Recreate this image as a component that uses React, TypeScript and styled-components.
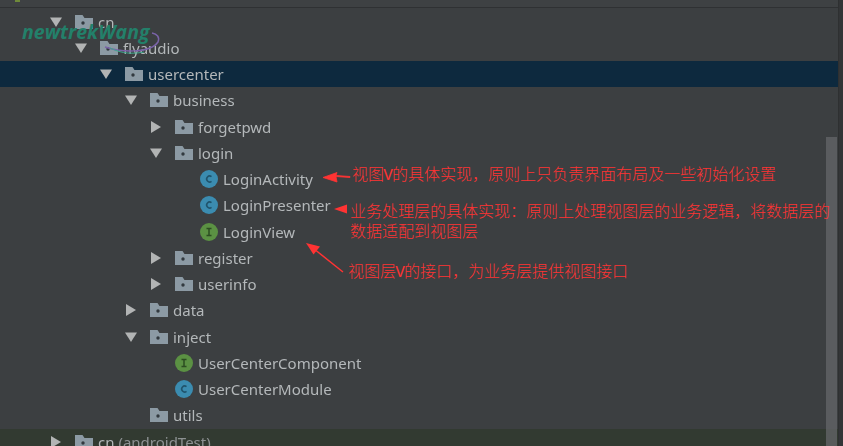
import * as React from 'react';
import styled, {createGlobalStyle} from 'styled-components';

const Global = createGlobalStyle`
    html, body {
        margin: 0;
        padding: 0;
        background: #3c3f41;
        overflow: hidden;
    }
`;

const Page = styled.div`
    position: relative;
    display: flex;
    width: 843px;
    height: 446px;
    overflow: hidden;
    background: #3c3f41;
    font-family: "Noto Sans", "Open Sans", sans-serif;
`;

const Main = styled.div`
    flex: 1;
    display: flex;
    flex-direction: column;
    min-width: 0;
`;

const RightEdge = styled.div`
    width: 4px;
    background: #333537;
    border-left: 1px solid #2e3031;
`;

const TopBar = styled.div`
    height: 7px;
    flex-shrink: 0;
    background: #3e4143;
    border-bottom: 1px solid #2f3133;
    margin-bottom: 0.5px;
`;

const Tree = styled.div`
    display: flex;
    flex-direction: column;
    filter: blur(0.35px);
`;

const Row = styled.div<{$depth: number; $tone?: 'selected' | 'module'}>`
    display: flex;
    align-items: center;
    height: 26.25px;
    flex-shrink: 0;
    box-sizing: border-box;
    padding-left: ${({$depth}) => 50 + $depth * 25}px;
    background: ${({$tone}) =>
        $tone === 'selected' ? '#0d293e' : $tone === 'module' ? '#323a31' : 'transparent'};
`;

const ArrowSlot = styled.div`
    width: 25px;
    flex-shrink: 0;
    display: flex;
    align-items: center;
`;

const Label = styled.span`
    margin-left: 5px;
    font-size: 15px;
    line-height: 20px;
    color: #b4b8ba;
    white-space: nowrap;
`;

const Muted = styled.span`
    color: #8d9192;
`;

const Annotation = styled.div<{$left: number; $top: number}>`
    position: absolute;
    left: ${({$left}) => $left}px;
    top: ${({$top}) => $top}px;
    width: 482px;
    font-family: "Noto Sans CJK SC", sans-serif;
    font-size: 16px;
    font-weight: 300;
    line-height: 20px;
    color: #ff3333;
`;

const Latin = styled.span`
    font-family: "Liberation Mono", monospace;
    font-size: 16px;
    margin: 0 -0.8px;
`;

const Scrollbar = styled.div`
    position: absolute;
    left: 826px;
    top: 137px;
    bottom: 0;
    width: 11px;
    background: rgba(98, 100, 102, 0.8);
`;

const Watermark = styled.div`
    position: absolute;
    left: 22px;
    top: 18px;
    font-family: "Open Sans", sans-serif;
    font-size: 19.5px;
    line-height: 27px;
    font-style: italic;
    font-weight: 700;
    color: #23806a;
`;

const Overlay = styled.svg`
    position: absolute;
    left: 0;
    top: 0;
    pointer-events: none;
`;

const Tick = styled.div`
    position: absolute;
    left: 15px;
    top: 0;
    width: 5px;
    height: 2px;
    background: #6f8a3a;
`;

const Expander: React.FC<{open: boolean}> = ({open}) => (
    <svg width="12" height="12" viewBox="0 0 12 12">
        {open ? <path d="M0 1.5h12L6 11z" fill="#b2b4b4" /> : <path d="M1 0l10 6-10 6z" fill="#b2b4b4" />}
    </svg>
);

const FolderIcon: React.FC = () => (
    <svg width="18" height="14" viewBox="0 0 18 14">
        <path d="M0 0h7.5l2 3H18v11H0z" fill="#8c9aa4" />
        <circle cx="8" cy="8" r="1.7" fill="#32393f" />
    </svg>
);

const TypeIcon: React.FC<{kind: 'class' | 'interface'}> = ({kind}) => (
    <svg width="18" height="18" viewBox="0 0 18 18">
        <circle cx="9" cy="9" r="9" fill={kind === 'class' ? '#3b8cb0' : '#5b9143'} />
        {kind === 'class' ? (
            <path d="M11.5 6.6A3 3 0 1 0 11.5 11.4" fill="none" stroke="#20546c" strokeWidth="1.6" />
        ) : (
            <path d="M6.5 5.5h5M9 5.5v7M6.5 12.5h5" fill="none" stroke="#2c4d22" strokeWidth="1.5" />
        )}
    </svg>
);

type Node = {
    depth: number;
    label: string;
    icon: 'folder' | 'class' | 'interface';
    open?: boolean;
    tone?: 'selected' | 'module';
    note?: string;
};

const nodes: Node[] = [
    {depth: 0, label: 'cn', icon: 'folder', open: true},
    {depth: 1, label: 'flyaudio', icon: 'folder', open: true},
    {depth: 2, label: 'usercenter', icon: 'folder', open: true, tone: 'selected'},
    {depth: 3, label: 'business', icon: 'folder', open: true},
    {depth: 4, label: 'forgetpwd', icon: 'folder', open: false},
    {depth: 4, label: 'login', icon: 'folder', open: true},
    {depth: 5, label: 'LoginActivity', icon: 'class'},
    {depth: 5, label: 'LoginPresenter', icon: 'class'},
    {depth: 5, label: 'LoginView', icon: 'interface'},
    {depth: 4, label: 'register', icon: 'folder', open: false},
    {depth: 4, label: 'userinfo', icon: 'folder', open: false},
    {depth: 3, label: 'data', icon: 'folder', open: false},
    {depth: 3, label: 'inject', icon: 'folder', open: true},
    {depth: 4, label: 'UserCenterComponent', icon: 'interface'},
    {depth: 4, label: 'UserCenterModule', icon: 'class'},
    {depth: 3, label: 'utils', icon: 'folder'},
    {depth: 0, label: 'cn', icon: 'folder', open: false, tone: 'module', note: '(androidTest)'},
];

const App: React.FC = () => {
    return (
        <Page>
            <Global />
            <Main>
                <TopBar />
                <Tree>
                    {nodes.map((node, i) => (
                        <Row key={i} $depth={node.depth} $tone={node.tone}>
                            <ArrowSlot>
                                {node.open !== undefined && <Expander open={node.open} />}
                            </ArrowSlot>
                            {node.icon === 'folder' ? <FolderIcon /> : <TypeIcon kind={node.icon} />}
                            <Label>
                                {node.label} {node.note && <Muted>{node.note}</Muted>}
                            </Label>
                        </Row>
                    ))}
                </Tree>
            </Main>
            <RightEdge />

            <Tick />
            <Scrollbar />

            <Annotation $left={352} $top={163}>视图<Latin>V</Latin>的具体实现，原则上只负责界面布局及一些初始化设置</Annotation>
            <Annotation $left={350} $top={200}>
                业务处理层的具体实现：原则上处理视图层的业务逻辑，将数据层的数据适配到视图层
            </Annotation>
            <Annotation $left={348} $top={260}>视图层<Latin>V</Latin>的接口，为业务层提供视图接口</Annotation>

            <Watermark>newtrekWang</Watermark>

            <Overlay width="843" height="446" viewBox="0 0 843 446">
                <path d="M350 177.500L336 176.500 337 182 323 177.500 337 172.500 336 175.500 350 176.500z" fill="#ff3333" stroke="#ff3333" strokeWidth="0.8" />
                <path d="M334 209l13-4.500v9z" fill="#ff3333" />
                <path d="M343 272L316 250.500" stroke="#ff3333" strokeWidth="1.500" fill="none" />
                <path d="M306 243l14 3.500-6.500 8z" fill="#ff3333" />
                <path d="M105 47C120 52 150 54 158 42C160 37 157 34 152 33" fill="none" stroke="#7a63a8" strokeWidth="1.500" />
                <path d="M110 48C122 54 134 54 144 52" fill="none" stroke="#3fa88c" strokeWidth="1" />
            </Overlay>
        </Page>
    );
};

export default App;
